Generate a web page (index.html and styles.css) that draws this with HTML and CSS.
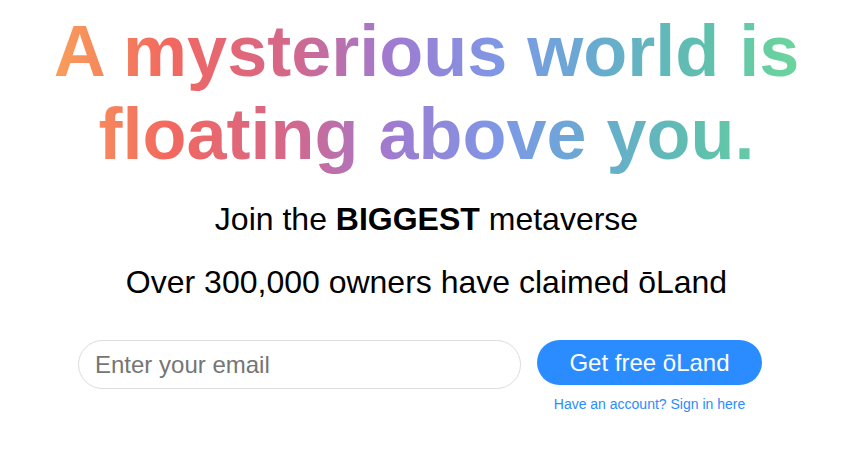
FILE: index.html
```html
<!DOCTYPE html>
<html lang="en">
<head>
<meta charset="utf-8">
<title>ōLand</title>
<link rel="stylesheet" href="styles.css">
</head>
<body>
<main class="hero">
  <h1 class="headline">A mysterious world is floating above you.</h1>
  <p class="sub">Join the <strong>BIGGEST</strong> metaverse</p>
  <p class="sub sub-second">Over 300,000 owners have claimed ōLand</p>
  <form class="signup" onsubmit="return false">
    <input class="email" type="email" placeholder="Enter your email">
    <div class="cta">
      <button class="btn" type="submit">Get free ōLand</button>
      <a class="signin" href="#">Have an account? Sign in here</a>
    </div>
  </form>
</main>
</body>
</html>
```
FILE: styles.css
```css
* { box-sizing: border-box; }
html, body { background: #fff; }
body {
  margin: 8px;
  font-family: "Liberation Sans", Arial, sans-serif;
  color: #000;
}
.hero {
  display: flex;
  flex-direction: column;
  align-items: center;
  text-align: center;
  padding-left: 8px;
}
.headline {
  margin: 2px 0 0;
  width: 760px;
  font-size: 72px;
  font-weight: 700;
  line-height: 83px;
  background: linear-gradient(90deg, #f9a25a 0%, #f2685f 16%, #d4678a 32%, #a07ad0 45%, #7d99e6 60%, #68abd0 72%, #5fbfae 86%, #6dd79b 100%);
  -webkit-background-clip: text;
  background-clip: text;
  color: transparent;
}
.sub {
  margin: 25px 0 0;
  font-size: 32px;
  line-height: 37px;
}
.sub-second { margin-top: 26px; }
.signup {
  display: flex;
  gap: 16px;
  margin: 39px 13px 0 0;
  align-items: flex-start;
}
.email {
  width: 443px;
  height: 49px;
  border: 1px solid #dcdcdc;
  border-radius: 25px;
  padding: 0 16px;
  font-family: inherit;
  font-size: 24px;
  color: #333;
  outline: none;
}
.email::placeholder { color: #757575; }
.cta {
  display: flex;
  flex-direction: column;
  align-items: center;
  gap: 11px;
}
.btn {
  width: 225px;
  height: 45px;
  border: 0;
  border-radius: 23px;
  background: #2a8cff;
  color: #fff;
  font-family: inherit;
  font-size: 24px;
  cursor: pointer;
}
.signin {
  font-size: 14px;
  line-height: 16px;
  color: #2a8cff;
  text-decoration: none;
}
```
